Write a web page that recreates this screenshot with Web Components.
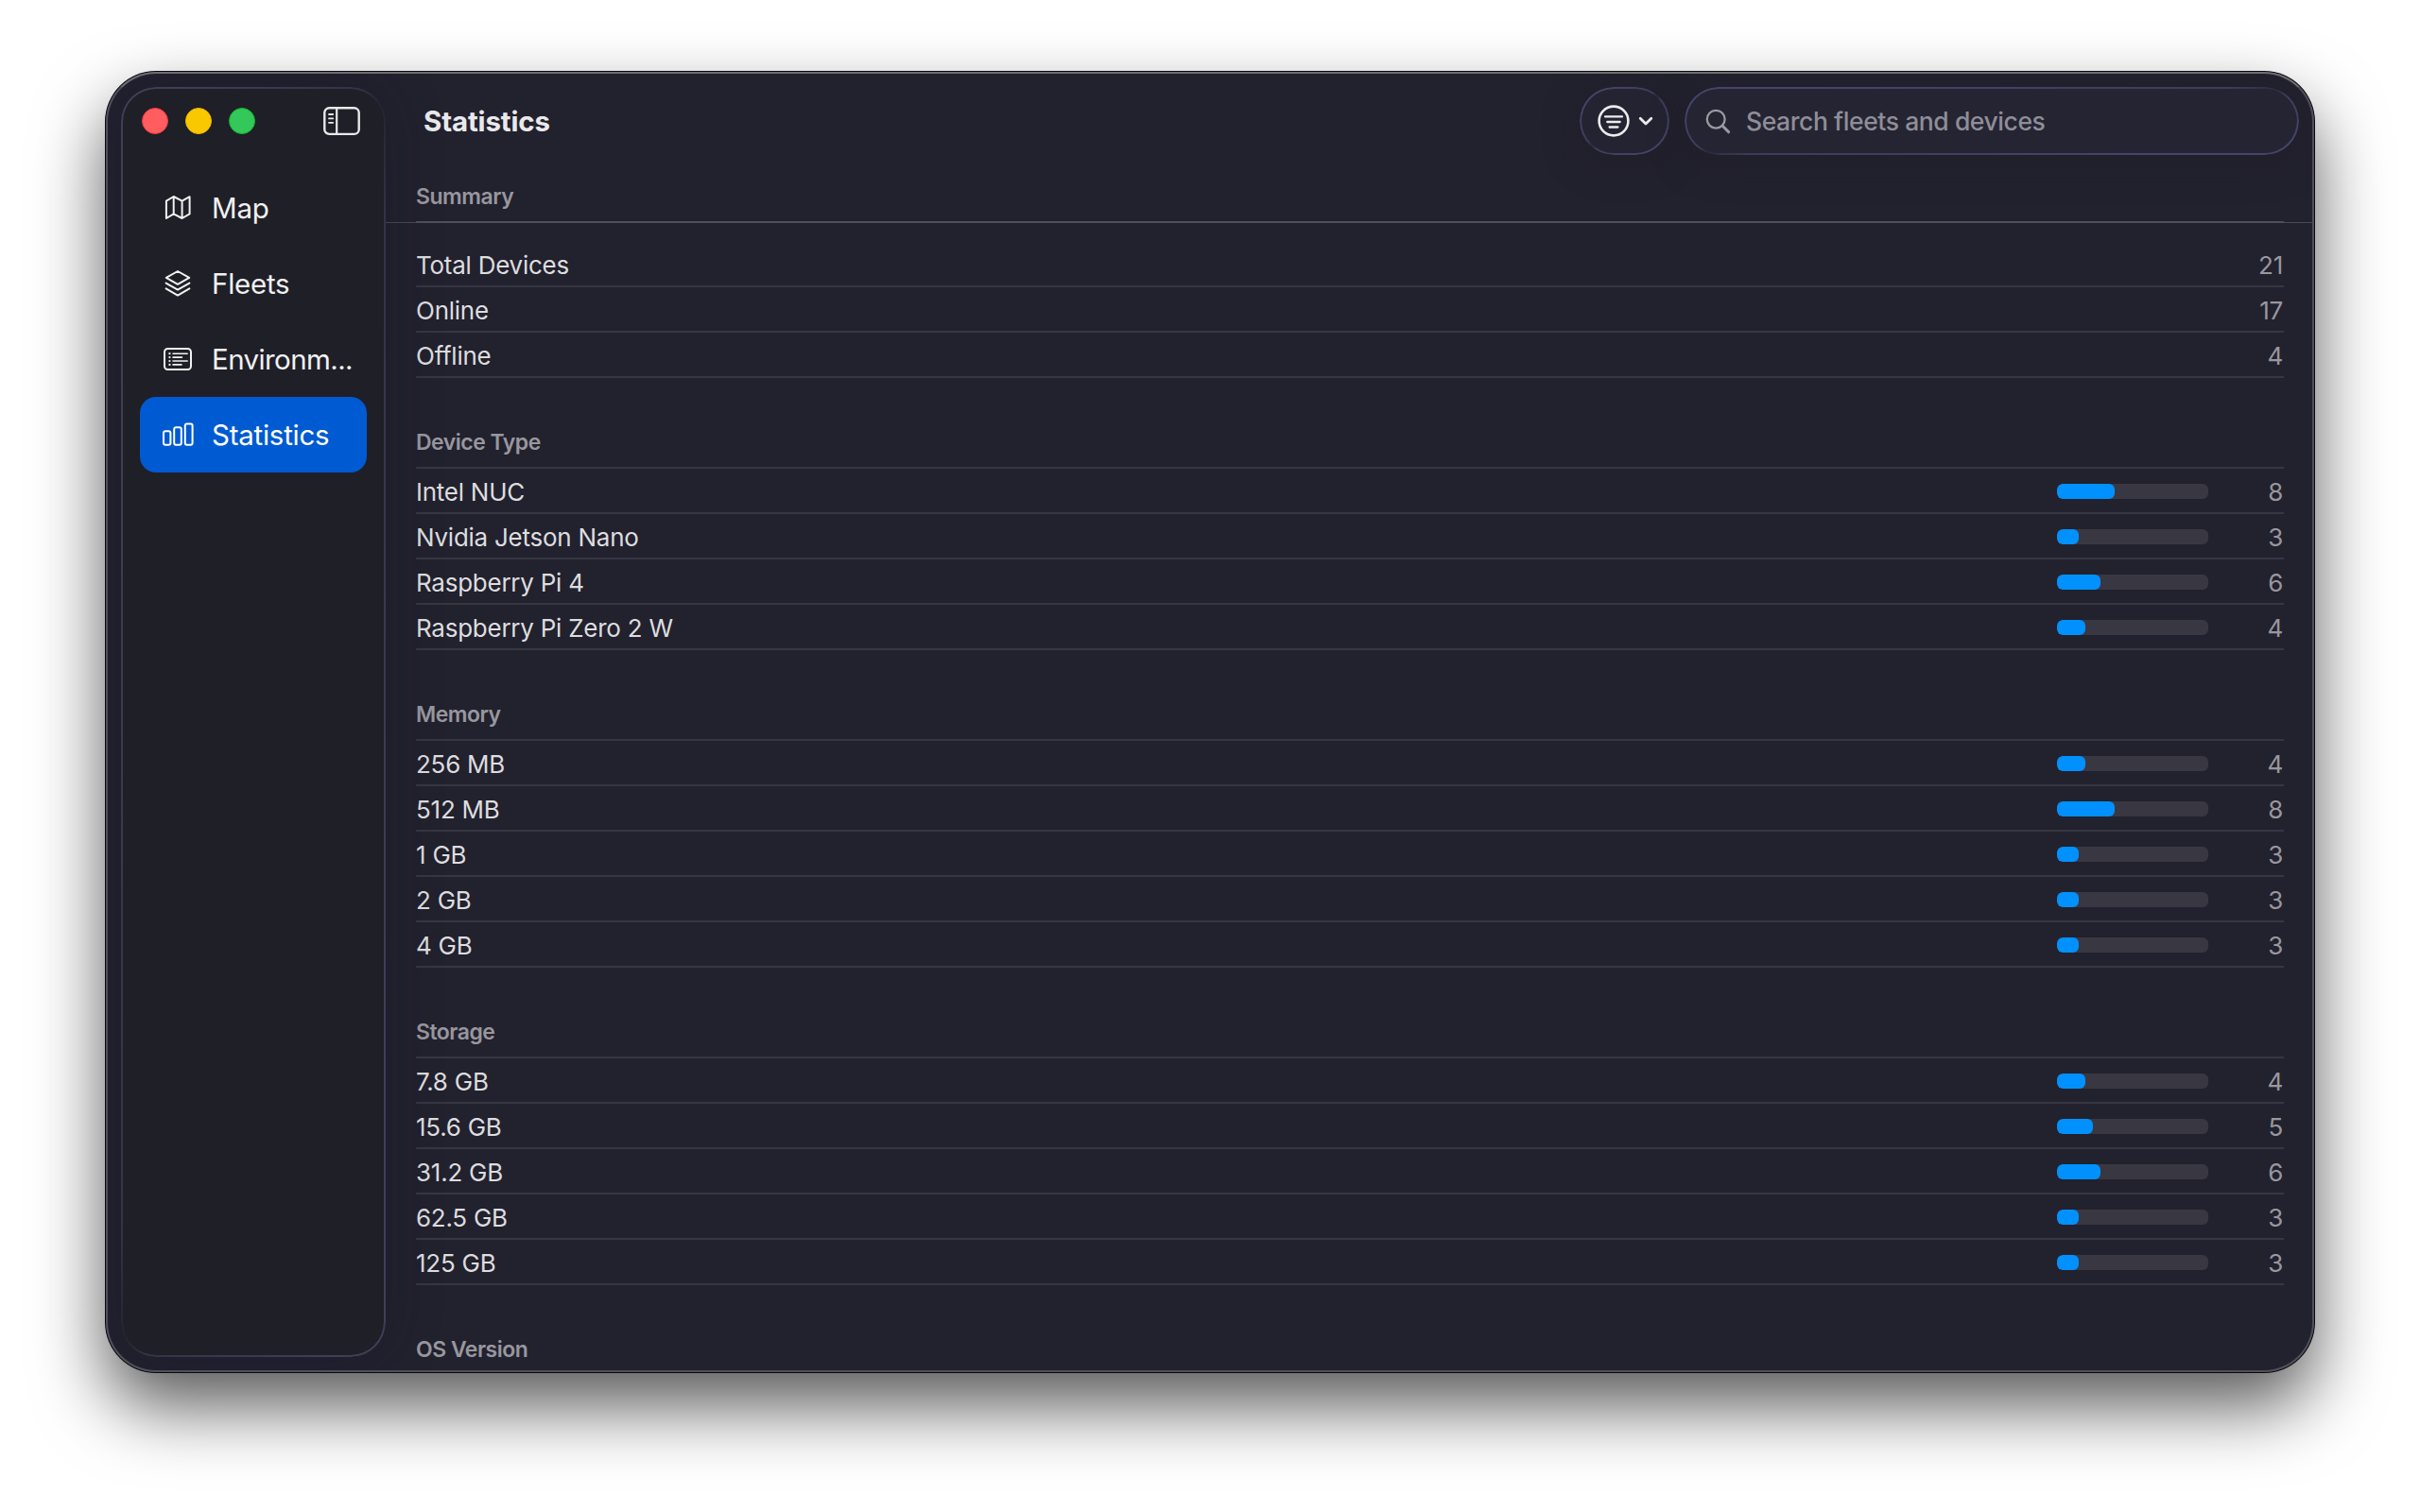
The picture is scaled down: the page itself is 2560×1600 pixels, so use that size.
<!DOCTYPE html>
<html lang="en">
<head>
<meta charset="utf-8">
<title>Statistics</title>
<style>
  html, body { margin: 0; height: 100%; }
  body {
    box-sizing: border-box;
    height: 1600px;
    padding: 76px 112px 148px;
    overflow: hidden;
    background: #fff;
    font-family: Inter, "Liberation Sans", sans-serif;
    --bg: #22212e;
    --text: #dddddf;
    --dim: #98979e;
    --line: #373643;
    --accent: #0091ff;
  }
</style>
</head>
<body>
<app-window>
  <side-bar slot="sidebar">
    <nav-item icon="map" label="Map"></nav-item>
    <nav-item icon="fleets" label="Fleets"></nav-item>
    <nav-item icon="env" label="Environm..." clipped></nav-item>
    <nav-item icon="stats" label="Statistics" selected></nav-item>
  </side-bar>
  <tool-bar heading="Statistics">
    <filter-button></filter-button>
    <search-field placeholder="Search fleets and devices"></search-field>
  </tool-bar>
  <stats-list></stats-list>
</app-window>

<script>
const ICONS = {
  map: `<svg width="28" height="28" viewBox="0 0 28 28"><path d="M1.9 6.6 9.7 2 18.6 6.6 26.6 2.2V20.4L18.6 25 9.7 20.4 1.9 25ZM9.7 2V20.4M18.6 6.6V25"/></svg>`,
  fleets: `<svg width="28" height="30" viewBox="0 0 28 30"><path d="M14 2 26.2 8.9 14 15.8 1.8 8.9ZM1.6 14.6 14 21.6 26.4 14.6M1.6 20.4 14 27.6 26.4 20.4"/></svg>`,
  env: `<svg width="32" height="26" viewBox="0 0 32 26"><rect x="2" y="2" width="28" height="22" rx="3.5"/><path d="M11 7.2H26.2M11 11.1H20.5M11 15H26.2M11 18.9H20" stroke-width="1.6"/><path d="M7.4 7.2h.1M7.4 11.1h.1M7.4 15h.1M7.4 18.9h.1" stroke-width="2.2"/></svg>`,
  stats: `<svg width="34" height="26" viewBox="0 0 34 26"><rect x="2" y="9.2" width="7.4" height="14.6" rx="2"/><rect x="13.2" y="5.2" width="7.6" height="18.6" rx="2"/><rect x="24.8" y="1.4" width="7.8" height="22.4" rx="2"/></svg>`,
};

// Glass edge: bright at top-left and bottom-right, fading on the other diagonal.
const GLASS = `
  .edge {
    position: absolute;
    inset: 0;
    border-radius: inherit;
    padding: var(--edge-w, 2px);
    background: linear-gradient(to bottom right,
      var(--edge-hi, #46446b) 0%, var(--edge-hi, #46446b) 12%, var(--edge-mid, #3e3c5a) 45%,
      var(--edge-lo, #2a293a) 50%, var(--edge-mid, #3e3c5a) 55%, var(--edge-hi, #46446b) 88%);
    -webkit-mask: linear-gradient(#000 0 0) content-box exclude, linear-gradient(#000 0 0);
    mask: linear-gradient(#000 0 0) content-box exclude, linear-gradient(#000 0 0);
    pointer-events: none;
  }
`;

const SECTIONS = [
  { title: 'Device Type', rows: [['Intel NUC', 8], ['Nvidia Jetson Nano', 3], ['Raspberry Pi 4', 6], ['Raspberry Pi Zero 2 W', 4]] },
  { title: 'Memory', rows: [['256 MB', 4], ['512 MB', 8], ['1 GB', 3], ['2 GB', 3], ['4 GB', 3]] },
  { title: 'Storage', rows: [['7.8 GB', 4], ['15.6 GB', 5], ['31.2 GB', 6], ['62.5 GB', 3], ['125 GB', 3]] },
  { title: 'OS Version', rows: [] },
];
const TOTAL = 21;

// --- <app-window> — frame, shadow and the two columns -----------------------
class AppWindow extends HTMLElement {
  constructor() {
    super();
    this.attachShadow({ mode: 'open' }).innerHTML = `
      <style>
        :host {
          display: block;
          position: relative;
          height: 1376px;
          border-radius: 53px;
          background: var(--bg);
          box-shadow: 0 0 0 1px #08080a, 0 36px 74px rgba(0, 0, 0, 0.65);
        }
        .cols {
          display: grid;
          grid-template-columns: 296px minmax(0, 1fr);
          height: 100%;
          border-radius: inherit;
          overflow: hidden;
        }
        .side { padding: 16px 0 16px 16px; }
        main { min-width: 0; overflow: hidden; }
        .frame {
          position: absolute;
          inset: 0;
          border: 2px solid #504f5b;
          border-top-color: #6c6c71;
          border-radius: inherit;
          pointer-events: none;
        }
      </style>
      <div class="cols">
        <div class="side"><slot name="sidebar"></slot></div>
        <main><slot></slot></main>
      </div>
      <div class="frame"></div>`;
  }
}

// --- <side-bar> — floating panel with window buttons and navigation ---------
class SideBar extends HTMLElement {
  constructor() {
    super();
    this.attachShadow({ mode: 'open' }).innerHTML = `
      <style>
        ${GLASS}
        :host {
          display: block;
          position: relative;
          box-sizing: border-box;
          height: 1344px;
          padding: 0 20px;
          border-radius: 37px;
          background: #1f1f27;
          box-shadow: 0 0 60px rgba(24, 20, 36, 0.3);
          --edge-hi: #403e57;
          --edge-mid: #353346;
          --edge-lo: #24232e;
          --edge-w: 1.6px;
        }
        header {
          display: flex;
          align-items: center;
          height: 72px;
          padding: 0 7px 0 2px;
          margin-bottom: 16px;
        }
        .lights { display: flex; gap: 18px; flex: 1; }
        .lights i {
          box-sizing: border-box;
          width: 28px;
          height: 28px;
          border-radius: 50%;
          border: 1px solid #f23a45;
          background: #ff5d60;
        }
        .lights i:nth-child(2) { background: #fac800; border-color: #efb800; }
        .lights i:nth-child(3) { background: #34c759; border-color: #12b52f; }
        svg { display: block; fill: none; stroke: #e9e8ea; stroke-linecap: round; }
      </style>
      <header>
        <div class="lights"><i></i><i></i><i></i></div>
        <svg width="39" height="31" viewBox="0 0 39 31">
          <rect x="1.3" y="1.3" width="36.4" height="27.6" rx="5" stroke-width="2.4"/>
          <path d="M14.2 2V29" stroke-width="2.2" stroke-linecap="butt"/>
          <path d="M6 8h4.2M6 12.4h4.2M6 16.8h4.2" stroke-width="1.8"/>
        </svg>
      </header>
      <nav><slot></slot></nav>
      <div class="edge"></div>`;
  }
}

// --- <nav-item> — icon and label, optionally selected -----------------------
class NavItem extends HTMLElement {
  constructor() {
    super();
    this.attachShadow({ mode: 'open' });
  }
  connectedCallback() {
    this.shadowRoot.innerHTML = `
      <style>
        :host {
          display: grid;
          grid-template-columns: 36px 1fr;
          column-gap: 18px;
          align-items: center;
          height: 80px;
          padding-left: 22px;
          border-radius: 17px;
          color: #f1f1f2;
          font-size: 29.5px;
          font-weight: 440;
          letter-spacing: -0.25px;
          white-space: nowrap;
        }
        :host([clipped]) { letter-spacing: -0.6px; }
        :host([selected]) { background: #005ad2; color: #fff; }
        .icon { display: flex; justify-content: center; }
        svg {
          fill: none;
          stroke: currentColor;
          stroke-width: 2;
          stroke-linejoin: round;
          stroke-linecap: round;
        }
      </style>
      <span class="icon">${ICONS[this.getAttribute('icon')]}</span>
      <span>${this.getAttribute('label')}</span>`;
  }
}

// --- <tool-bar> — window title on the left, controls on the right -----------
class ToolBar extends HTMLElement {
  constructor() {
    super();
    this.attachShadow({ mode: 'open' });
  }
  connectedCallback() {
    this.shadowRoot.innerHTML = `
      <style>
        :host {
          display: flex;
          align-items: center;
          gap: 16px;
          height: 72px;
          padding: 16px 16px 0 40px;
        }
        h1 {
          flex: 1;
          margin: 0;
          color: #e9e9eb;
          font-size: 29.5px;
          font-weight: 690;
          letter-spacing: -0.15px;
        }
      </style>
      <h1>${this.getAttribute('heading')}</h1>
      <slot></slot>`;
  }
}

class FilterButton extends HTMLElement {
  constructor() {
    super();
    this.attachShadow({ mode: 'open' }).innerHTML = `
      <style>
        ${GLASS}
        :host {
          display: flex;
          align-items: center;
          position: relative;
          box-sizing: border-box;
          width: 95px;
          height: 72px;
          padding-left: 18.5px;
          gap: 9px;
          border-radius: 36px;
          background: #242331;
          box-shadow: 0 8px 36px rgba(32, 30, 36, 0.5);
          --edge-w: 1.6px;
        }
        svg { fill: none; stroke: #ecebed; stroke-linecap: round; stroke-linejoin: round; }
      </style>
      <svg width="34" height="34" viewBox="0 0 34 34">
        <circle cx="17" cy="17" r="15.4" stroke-width="2.6"/>
        <path d="M8 12.4H26M10.3 18H23.7M12.6 23.5H21.4" stroke-width="2.3"/>
      </svg>
      <svg width="16" height="12" viewBox="0 0 16 12"><path d="M2.2 3.2 8 9 13.8 3.2" stroke-width="2.8"/></svg>
      <div class="edge"></div>`;
  }
}

class SearchField extends HTMLElement {
  constructor() {
    super();
    this.attachShadow({ mode: 'open' });
  }
  connectedCallback() {
    this.shadowRoot.innerHTML = `
      <style>
        ${GLASS}
        :host {
          display: flex;
          align-items: center;
          position: relative;
          box-sizing: border-box;
          width: 650px;
          height: 72px;
          padding-left: 22px;
          gap: 16px;
          border-radius: 36px;
          background: #252433;
          color: #8f8e97;
          font-size: 26.5px;
          font-weight: 530;
          letter-spacing: -0.42px;
          box-shadow: 0 8px 36px rgba(32, 30, 36, 0.5);
          --edge-w: 1.6px;
        }
        svg { fill: none; stroke: #9b9aa2; stroke-linecap: round; }
      </style>
      <svg width="27" height="27" viewBox="0 0 27 27">
        <circle cx="11.2" cy="11.2" r="9.4" stroke-width="2.3"/>
        <path d="M18.2 18.2 24.6 24.6" stroke-width="3"/>
      </svg>
      <span>${this.getAttribute('placeholder')}</span>
      <div class="edge"></div>`;
  }
}

// --- <stat-row> — label, optional share bar, count --------------------------
class StatRow extends HTMLElement {
  constructor() {
    super();
    this.attachShadow({ mode: 'open' });
  }
  connectedCallback() {
    const value = Number(this.getAttribute('value'));
    const share = (value / TOTAL) * 100;
    this.shadowRoot.innerHTML = `
      <style>
        :host {
          display: flex;
          align-items: center;
          box-sizing: border-box;
          height: 48px;
          padding-top: 2px;
          border-bottom: 2px solid var(--line);
          color: var(--text);
          font-size: 26px;
          font-weight: 440;
          letter-spacing: -0.25px;
        }
        .label { flex: 1; }
        .bar {
          width: 160px;
          height: 16px;
          border-radius: 6px;
          background: #393842;
          overflow: hidden;
        }
        .fill { height: 100%; border-radius: 6px; background: var(--accent); }
        .value { width: 80px; padding-right: 1px; box-sizing: border-box; text-align: right; color: var(--dim); }
      </style>
      <span class="label">${this.getAttribute('label')}</span>
      ${this.hasAttribute('bar') ? `<div class="bar"><div class="fill" style="width:${share}%"></div></div>` : ''}
      <span class="value">${value}</span>`;
  }
}

// --- <stats-list> — pinned summary header and the grouped rows --------------
class StatsList extends HTMLElement {
  constructor() {
    super();
    this.attachShadow({ mode: 'open' });
  }
  connectedCallback() {
    const row = (r, bar) => `<stat-row label="${r[0]}" value="${r[1]}" ${bar ? 'bar' : ''}></stat-row>`;
    this.shadowRoot.innerHTML = `
      <style>
        :host { display: block; }
        h2 {
          box-sizing: border-box;
          margin: 0;
          color: var(--dim);
          font-size: 23px;
          line-height: 28px;
          font-weight: 630;
          letter-spacing: -0.5px;
        }
        .pinned {
          height: 72px;
          padding: 30px 32px 0;
          background:
            linear-gradient(#504f5b, #504f5b) 32px 70px / calc(100% - 64px) 2px no-repeat,
            linear-gradient(#4a4957, #4a4957) 0 71px / 100% 1px no-repeat;
        }
        .rows { padding: 20px 32px 0; }
        .rows h2 { height: 96px; padding-top: 54px; border-bottom: 2px solid var(--line); }
      </style>
      <h2 class="pinned">Summary</h2>
      <div class="rows">
        ${[['Total Devices', TOTAL], ['Online', 17], ['Offline', 4]].map((r) => row(r, false)).join('')}
        ${SECTIONS.map((s) => `<h2>${s.title}</h2>${s.rows.map((r) => row(r, true)).join('')}`).join('')}
      </div>`;
  }
}

customElements.define('app-window', AppWindow);
customElements.define('side-bar', SideBar);
customElements.define('nav-item', NavItem);
customElements.define('tool-bar', ToolBar);
customElements.define('filter-button', FilterButton);
customElements.define('search-field', SearchField);
customElements.define('stat-row', StatRow);
customElements.define('stats-list', StatsList);
</script>
</body>
</html>
